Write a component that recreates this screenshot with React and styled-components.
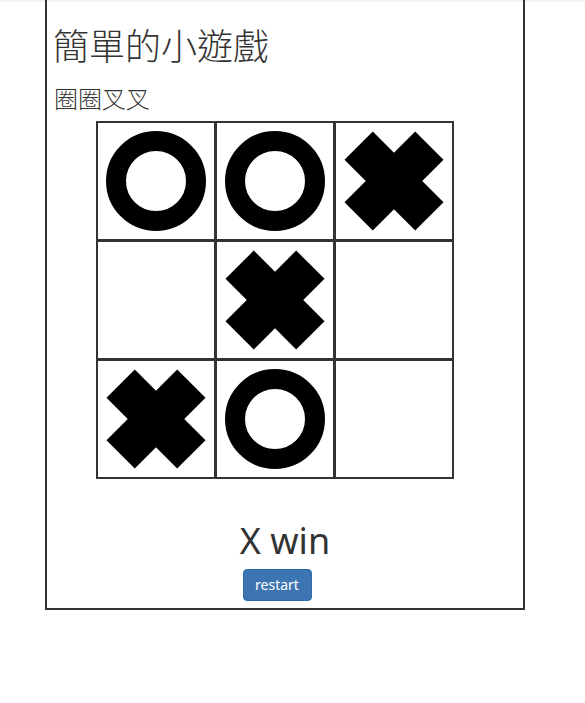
import React from "react";
import styled, { createGlobalStyle } from "styled-components";

const Global = createGlobalStyle`
  html {
    background: #ffffff linear-gradient(#f3f3f3 0, #f3f3f3 2px, #ffffff 2px) no-repeat;
  }
  html, body {
    margin: 0;
    padding: 0;
  }
  body {
    font-family: "Noto Sans", "Noto Sans CJK TC", sans-serif;
    color: #333;
    font-size: 14px;
    line-height: 1.42857;
  }
`;

const Frame = styled.div`
  box-sizing: border-box;
  width: 480px;
  margin-left: 45px;
  border: 2px solid #333;
  border-top: none;
  padding: 5px 8px 7px;
`;

const Title = styled.h1`
  font-family: "Noto Sans CJK TC", sans-serif;
  font-size: 36px;
  font-weight: 300;
  line-height: 1.1;
  margin: 20px 0 10px -2px;
`;

const Subtitle = styled.h3`
  font-family: "Noto Sans CJK TC", sans-serif;
  font-size: 24px;
  font-weight: 300;
  line-height: 1.1;
  margin: 20px 0 10px -1px;
`;

const Board = styled.div`
  display: grid;
  grid-template-columns: repeat(3, 116px);
  grid-auto-rows: 116px;
  gap: 3px;
  width: fit-content;
  background: #333;
  border: 2px solid #333;
  margin-left: 41px;
`;

const Cell = styled.div`
  background: #fff;
  display: flex;
  align-items: center;
  justify-content: center;
`;

const Result = styled.h1`
  font-family: "Noto Sans", "Noto Sans CJK TC", sans-serif;
  font-size: 36px;
  font-weight: 400;
  line-height: 1.1;
  text-align: center;
  margin: 42px 0 8px;
`;

const ButtonRow = styled.div`
  text-align: center;
  padding-right: 16px;
  line-height: 0;
`;

const RestartButton = styled.button`
  box-sizing: border-box;
  width: 69px;
  height: 32px;
  padding: 0 10px;
  font-family: "Noto Sans", sans-serif;
  font-size: 14px;
  line-height: 20px;
  color: #fff;
  background: #3d75b3;
  border: 1px solid #2e6da4;
  border-radius: 4px;
  cursor: pointer;
`;

const MarkO = () => (
  <svg width="100" height="100" viewBox="0 0 100 100">
    <circle cx="50" cy="50" r="40" fill="none" stroke="#000" strokeWidth="20" />
  </svg>
);

const MarkX = () => (
  <svg width="100" height="100" viewBox="0 0 100 100">
    <rect x="30" y="0" width="40" height="100" fill="#000" transform="rotate(45 50 50)" />
    <rect x="30" y="0" width="40" height="100" fill="#000" transform="rotate(-45 50 50)" />
  </svg>
);

const board = ["O", "O", "X", "", "X", "", "X", "O", ""];

export default function App() {
  return (
    <>
      <Global />
      <Frame>
        <Title>簡單的小遊戲</Title>
        <Subtitle>圈圈叉叉</Subtitle>
        <Board>
          {board.map((v, i) => (
            <Cell key={i}>
              {v === "O" ? <MarkO /> : v === "X" ? <MarkX /> : null}
            </Cell>
          ))}
        </Board>
        <Result>X win</Result>
        <ButtonRow>
          <RestartButton>restart</RestartButton>
        </ButtonRow>
      </Frame>
    </>
  );
}
